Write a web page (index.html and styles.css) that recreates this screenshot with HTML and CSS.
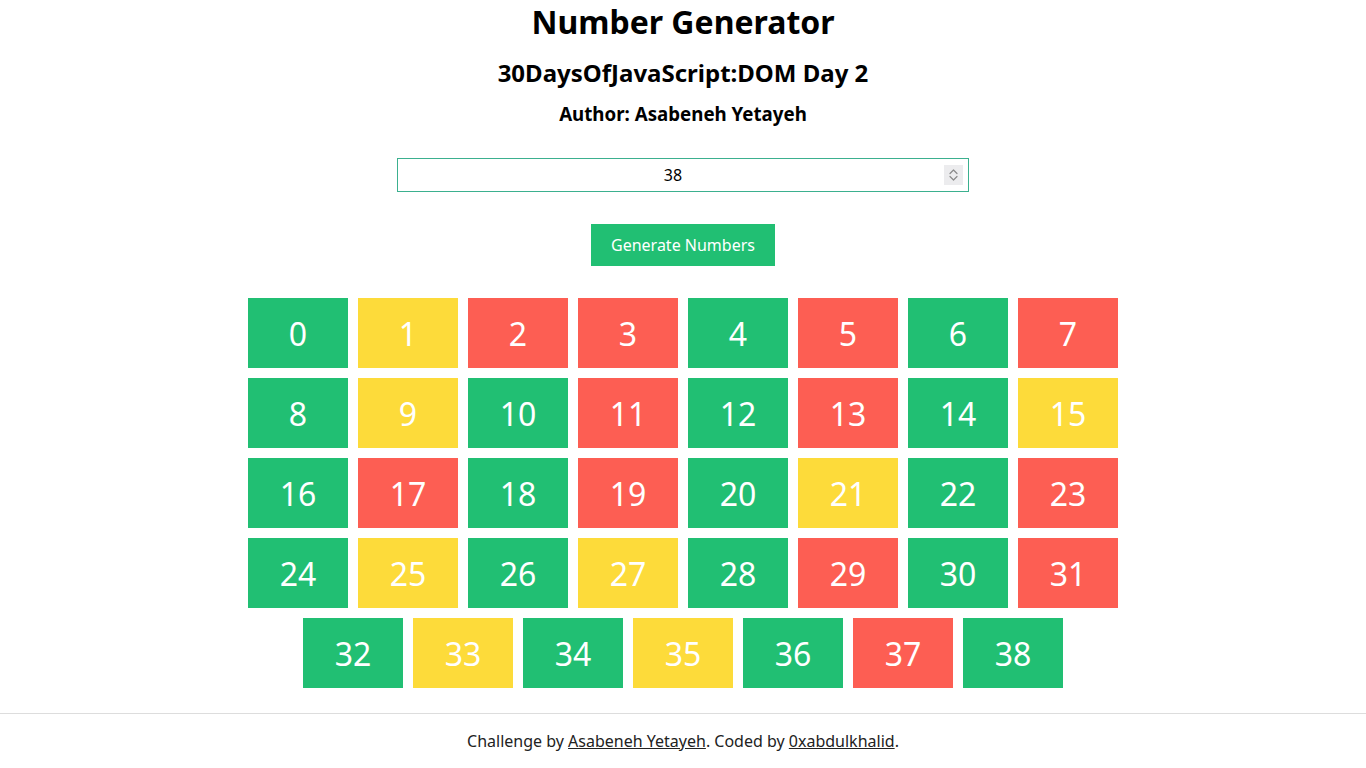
FILE: index.html
```html
<!DOCTYPE html>
<html lang="en">
<head>
<meta charset="utf-8">
<title>Number Generator</title>
<link rel="stylesheet" href="styles.css">
</head>
<body>
<main class="page">
  <header class="header">
    <h1 class="title">Number Generator</h1>
    <h2 class="subtitle">30DaysOfJavaScript:DOM Day 2</h2>
    <h3 class="author">Author: Asabeneh Yetayeh</h3>
  </header>
  <div class="controls">
    <div class="input-wrap">
      <input class="count-input" type="number" value="38">
      <span class="spinner" aria-hidden="true">
        <svg width="19" height="20" viewBox="0 0 19 20">
          <path d="M6 8.5 L9.5 5 L13 8.5" fill="none" stroke="#8a8a8a" stroke-width="1.2" stroke-linecap="round" stroke-linejoin="round"/>
          <path d="M6 11.5 L9.5 15 L13 11.5" fill="none" stroke="#8a8a8a" stroke-width="1.2" stroke-linecap="round" stroke-linejoin="round"/>
        </svg>
      </span>
    </div>
    <button class="generate-btn" type="button">Generate Numbers</button>
  </div>
  <div class="grid">
    <div class="tile even">0</div>
    <div class="tile odd">1</div>
    <div class="tile prime">2</div>
    <div class="tile prime">3</div>
    <div class="tile even">4</div>
    <div class="tile prime">5</div>
    <div class="tile even">6</div>
    <div class="tile prime">7</div>
    <div class="tile even">8</div>
    <div class="tile odd">9</div>
    <div class="tile even">10</div>
    <div class="tile prime">11</div>
    <div class="tile even">12</div>
    <div class="tile prime">13</div>
    <div class="tile even">14</div>
    <div class="tile odd">15</div>
    <div class="tile even">16</div>
    <div class="tile prime">17</div>
    <div class="tile even">18</div>
    <div class="tile prime">19</div>
    <div class="tile even">20</div>
    <div class="tile odd">21</div>
    <div class="tile even">22</div>
    <div class="tile prime">23</div>
    <div class="tile even">24</div>
    <div class="tile odd">25</div>
    <div class="tile even">26</div>
    <div class="tile odd">27</div>
    <div class="tile even">28</div>
    <div class="tile prime">29</div>
    <div class="tile even">30</div>
    <div class="tile prime">31</div>
    <div class="tile even">32</div>
    <div class="tile odd">33</div>
    <div class="tile even">34</div>
    <div class="tile odd">35</div>
    <div class="tile even">36</div>
    <div class="tile prime">37</div>
    <div class="tile even">38</div>
  </div>
</main>
<footer class="footer">
  <p class="credits">Challenge by <a href="#">Asabeneh Yetayeh</a>. Coded by <a href="#">0xabdulkhalid</a>.</p>
</footer>
</body>
</html>
```

FILE: styles.css
```css
* { box-sizing: border-box; }

body {
  margin: 0;
  font-family: "Noto Sans", "Open Sans", sans-serif;
  color: #000;
  background: #fff;
}

.page {
  display: flex;
  flex-direction: column;
  align-items: center;
}

.header {
  display: flex;
  flex-direction: column;
  align-items: center;
}

.title {
  margin: 0;
  font-size: 32px;
  line-height: 44px;
  font-weight: 700;
}

.subtitle {
  margin: 12px 0 0;
  font-size: 24px;
  line-height: 33px;
  font-weight: 700;
}

.author {
  margin: 12px 0 0;
  font-size: 18.72px;
  line-height: 26px;
  font-weight: 700;
}

.controls {
  display: flex;
  flex-direction: column;
  align-items: center;
  margin-top: 31px;
}

.input-wrap {
  position: relative;
  width: 572px;
  height: 34px;
}

.count-input {
  display: block;
  width: 100%;
  height: 100%;
  border: 1px solid #3bb08f;
  outline: none;
  font-family: inherit;
  font-size: 16px;
  text-align: center;
  color: #000;
  padding: 0 25px 0 5px;
  -moz-appearance: textfield;
  appearance: textfield;
}

.count-input::-webkit-inner-spin-button,
.count-input::-webkit-outer-spin-button {
  -webkit-appearance: none;
  margin: 0;
}

.spinner {
  position: absolute;
  top: 7px;
  right: 6px;
  width: 19px;
  height: 20px;
  background: #ececee;
  display: flex;
}

.generate-btn {
  margin-top: 32px;
  width: 184px;
  height: 42px;
  border: none;
  background: #21bf73;
  color: #fff;
  font-family: inherit;
  font-size: 16px;
}

.grid {
  display: flex;
  flex-wrap: wrap;
  justify-content: center;
  gap: 10px;
  width: 870px;
  margin-top: 32px;
}

.tile {
  width: 100px;
  height: 70px;
  display: flex;
  align-items: center;
  justify-content: center;
  color: #fff;
  font-size: 32px;
}

.even { background: #21bf73; }
.odd { background: #fddb3a; }
.prime { background: #fd5e53; }

.footer {
  margin-top: 25px;
  border-top: 1px solid #ddd;
  display: flex;
  justify-content: center;
}

.credits {
  margin: 16px 0 0;
  font-size: 16px;
  line-height: 22px;
  color: #222;
}

.credits a {
  color: #222;
}
```
